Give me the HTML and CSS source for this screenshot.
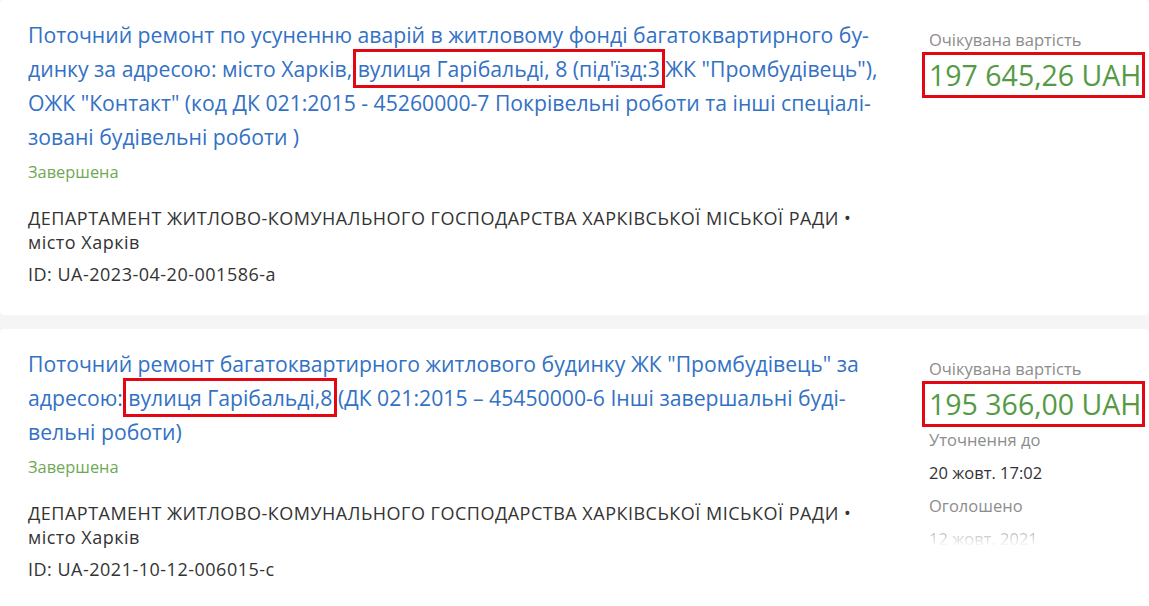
FILE: index.html
```html
<!DOCTYPE html>
<html lang="uk">
<head>
    <meta charset="UTF-8">
    <meta name="viewport" content="width=device-width, initial-scale=1.0">
    <title>Закупівлі</title>
    <link rel="stylesheet" href="styles.css">
</head>
<body>

<div class="list">
    <div class="card">
        <div class="main">
            <a class="title" href="#">Поточний ремонт по усуненню аварій в житловому фонді багатоквартирного бу&shy;динку за адресою: місто Харків, <span class="mark">вулиця Гарібальді, 8 (під'їзд:3</span> ЖК "Промбудівець"), ОЖК "Контакт" (код ДК 021:2015 - 45260000-7 Покрівельні роботи та інші спеціалі&shy;зовані будівельні роботи )</a>
            <div class="status">Завершена</div>
            <div class="org">ДЕПАРТАМЕНТ ЖИТЛОВО-КОМУНАЛЬНОГО ГОСПОДАРСТВА ХАРКІВСЬКОЇ МІСЬКОЇ РАДИ • місто Харків</div>
            <div class="tender-id">ID: UA-2023-04-20-001586-a</div>
        </div>
        <div class="side">
            <div class="label">Очікувана вартість</div>
            <div class="price"><span class="mark">197 645,26 UAH</span></div>
        </div>
    </div>

    <div class="card">
        <div class="main">
            <a class="title" href="#">Поточний ремонт багатоквартирного житлового будинку ЖК "Промбудівець" за адресою: <span class="mark">вулиця Гарібальді,8</span> (ДК 021:2015 – 45450000-6 Інші завершальні буді&shy;вельні роботи)</a>
            <div class="status">Завершена</div>
            <div class="org">ДЕПАРТАМЕНТ ЖИТЛОВО-КОМУНАЛЬНОГО ГОСПОДАРСТВА ХАРКІВСЬКОЇ МІСЬКОЇ РАДИ • місто Харків</div>
            <div class="tender-id">ID: UA-2021-10-12-006015-c</div>
        </div>
        <div class="side">
            <div class="label">Очікувана вартість</div>
            <div class="price"><span class="mark">195 366,00 UAH</span></div>
            <div class="label">Уточнення до</div>
            <div class="value">20 жовт. 17:02</div>
            <div class="label">Оголошено</div>
            <div class="value faded">12 жовт. 2021</div>
        </div>
    </div>
</div>

</body>
</html>
```

FILE: styles.css
```css
body { margin: 0; background-color: #fff; font-family: "Open Sans", "Noto Sans", sans-serif; color: #333; }
.list { display: flex; flex-direction: column; gap: 14px; background-color: #f5f5f5; }
.card { display: flex; gap: 38px; padding: 18px 0 29px 28px; background-color: #fff; border-radius: 4px; }
.main { width: 863px; flex-shrink: 0; }
.title { display: block; font-size: 21.2px; line-height: 34px; color: #3371c4; text-decoration: none; hyphens: manual; }
.status { margin-top: 6px; font-size: 16.4px; line-height: 24px; color: #6fa854; }
.org { margin-top: 22px; font-size: 18px; letter-spacing: 0.5px; line-height: 24px; color: #333; }
.tender-id { margin-top: 8px; font-size: 18px; letter-spacing: 0.5px; line-height: 24px; color: #333; }
.side { padding-top: 5px; flex: 1; }
.label { font-size: 16.5px; line-height: 33px; color: #8c8c8c; }
.value { font-size: 16.5px; line-height: 33px; color: #333; }
.value.faded { color: #bbb; -webkit-mask-image: linear-gradient(to bottom, #000 30%, transparent 75%); mask-image: linear-gradient(to bottom, #000 30%, transparent 75%); }
.price { font-size: 28.5px; line-height: 38px; color: #559a44; white-space: nowrap; }
.mark { outline: 3px solid #e30613; outline-offset: 2px; }
.price .mark { outline-offset: 1px; margin-left: -3px; padding-left: 3px; }
```
